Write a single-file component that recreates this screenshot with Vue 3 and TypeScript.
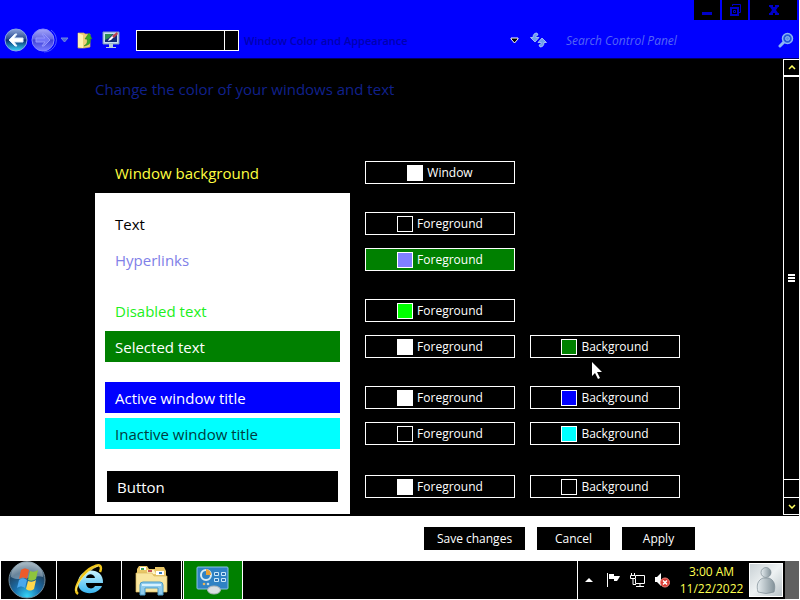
<script setup lang="ts">
import { ref } from 'vue'

interface Choice {
  label: string
  color: string
}

interface Item {
  name: string
  kind: string
  spaced: boolean
  choices: Choice[]
}

const fg = (color: string): Choice => ({ label: 'Foreground', color })
const bg = (color: string): Choice => ({ label: 'Background', color })

const items: Item[] = [
  { name: 'Text', kind: 'text', spaced: true, choices: [fg('#000000')] },
  { name: 'Hyperlinks', kind: 'link', spaced: false, choices: [fg('#8080ff')] },
  { name: 'Disabled text', kind: 'disabled', spaced: true, choices: [fg('#00ff00')] },
  { name: 'Selected text', kind: 'selected', spaced: false, choices: [fg('#ffffff'), bg('#008000')] },
  { name: 'Active window title', kind: 'active', spaced: true, choices: [fg('#ffffff'), bg('#0000ff')] },
  { name: 'Inactive window title', kind: 'inactive', spaced: false, choices: [fg('#000000'), bg('#00ffff')] },
  { name: 'Button', kind: 'button', spaced: true, choices: [fg('#ffffff'), bg('#000000')] },
]

const current = ref('Hyperlinks')
const query = ref('')
</script>

<template>
  <div class="screen">
    <header class="chrome">
      <div class="captions">
        <button class="caption" aria-label="Minimize">
          <svg width="14" height="14" viewBox="0 0 14 14"><path d="M2 9h10v3H2z" fill="#0000c8" /></svg>
        </button>
        <button class="caption" aria-label="Restore">
          <svg width="14" height="14" viewBox="0 0 14 14" fill="none" stroke="#0000c8">
            <path d="M4.500 3v-1.500h8v8H11" /><path d="M3 5h7v7H3z" stroke-width="2" /><path d="M5.500 7.500h2v2h-2z" />
          </svg>
        </button>
        <button class="caption close" aria-label="Close">
          <svg width="14" height="14" viewBox="0 0 14 14">
            <path d="M2 2h4v2h2V2h4v2h-1L9 7l2 3h1v2H8v-2H6v2H2v-2h1l2-3-2-3H2z" fill="#0000c8" />
          </svg>
        </button>
      </div>
      <nav class="nav">
        <button class="plain" aria-label="Back">
          <svg width="24" height="26" viewBox="0 0 24 26">
            <defs>
              <linearGradient id="back" x1="0" y1="0" x2="0" y2="1">
                <stop offset="0" stop-color="#8ba4d8" /><stop offset=".45" stop-color="#2a4b94" />
                <stop offset=".5" stop-color="#082c70" /><stop offset="1" stop-color="#36d6f8" />
              </linearGradient>
            </defs>
            <circle cx="12" cy="13" r="11" fill="url(#back)" stroke="#86a4e8" />
            <path d="M5 13l6-6h2l-3 4h9v4h-9l3 4h-2z" fill="#fff" stroke="#d9ecff" stroke-linejoin="round" />
          </svg>
        </button>
        <button class="plain" aria-label="Forward">
          <svg width="26" height="26" viewBox="0 0 26 26">
            <defs>
              <linearGradient id="fwd" x1="0" y1="0" x2="0" y2="1">
                <stop offset="0" stop-color="#a4a6f8" /><stop offset=".45" stop-color="#6466e4" />
                <stop offset=".5" stop-color="#3c3ed8" /><stop offset="1" stop-color="#7c80ff" />
              </linearGradient>
            </defs>
            <path d="M20 3a12 12 0 0 1-7 22" fill="none" stroke="#4c5cff" />
            <circle cx="12" cy="13" r="11" fill="url(#fwd)" stroke="#8488ff" />
            <path d="M19 13l-6-6h-2l3 4H5v4h9l-3 4h2z" fill="#7476f6" stroke="#9496fc" stroke-linejoin="round" />
          </svg>
        </button>
        <button class="plain" aria-label="Recent pages">
          <svg width="9" height="6" viewBox="0 0 9 6"><path d="M1 1h7L4.500 5z" fill="#4a68d8" stroke="#7088e0" /></svg>
        </button>
        <button class="plain folder" aria-label="Up">
          <svg width="16" height="18" viewBox="0 0 16 18">
            <path d="M1 2h6l1 1h5v13l-6 1H1z" fill="#ecd078" stroke="#d0b058" stroke-width=".7" />
            <path d="M1 2l5 2v13l-5-1z" fill="#fff0b0" />
            <path d="M7 15c3-2 4-4 3-7H8l4-6 3 6h-2c1 4-1 6-6 7z" fill="#3cab28" stroke="#1f7f18" stroke-width=".5" />
          </svg>
        </button>
        <svg class="place" width="18" height="18" viewBox="0 0 18 18">
          <path d="M1 1h16v12H1z" fill="#c6dcf0" stroke="#7796b8" />
          <path d="M3 3h12v8H3z" fill="#102878" />
          <path d="M3 3h8L7 7 3 9z" fill="#2c8c58" />
          <path d="M6 10l1-2 5-5 2 1-5 5z" fill="#fff" /><path d="M10 5l5-4 1 2-4 4z" fill="#ba4050" />
          <path d="M7 13h4v3h3v1H4v-1h3z" fill="#b8ccda" />
        </svg>
        <div class="combo"><span class="combo-field"></span><span class="combo-drop"></span></div>
        <span class="crumb">Window Color and Appearance</span>
        <button class="plain" aria-label="Previous locations">
          <svg width="9" height="7" viewBox="0 0 9 7"><path d="M1 1h7v1L4.500 6 1 2z" fill="#000" stroke="#fff" /></svg>
        </button>
        <button class="plain refresh" aria-label="Refresh">
          <svg width="17" height="16" viewBox="0 0 17 16" fill="#6f9fec" stroke="#b4d0fa" stroke-width=".8" stroke-linejoin="round">
            <path d="M7 1C4 1 3 3 3 5.500H.500L5 10l4-4.500H6C6 4 6 3.500 8 3z" />
            <path d="M10 15c3 0 4-2 4-4.500h2.500L12 6l-4 4.500h3c0 1.500 0 2-2 2.500z" />
          </svg>
        </button>
        <label class="search">
          <input v-model="query" type="search" placeholder="Search Control Panel" aria-label="Search Control Panel" />
          <svg width="16" height="16" viewBox="0 0 16 16" fill="none">
            <path d="M6 10l-4 4" stroke="#8ab4f4" stroke-width="3" stroke-linecap="round" />
            <circle cx="9.500" cy="6.500" r="5" fill="#2458d8" stroke="#8ab4f4" stroke-width="1.500" />
            <circle cx="9.500" cy="6.500" r="2" fill="#5c90e8" stroke="#8ab4f4" />
          </svg>
        </label>
      </nav>
    </header>

    <div class="body">
      <main class="content">
        <h1>Change the color of your windows and text</h1>
        <div class="columns">
          <div class="labels">
            <div class="label window">Window background</div>
            <div class="preview">
              <div v-for="item in items" :key="item.name" class="label" :class="[item.kind, { spaced: item.spaced }]">
                {{ item.name }}
              </div>
            </div>
          </div>
          <div class="pickers">
            <div class="picker-row">
              <button class="picker">
                <span class="swatch" :style="{ background: '#ffffff' }"></span>Window
              </button>
            </div>
            <div v-for="item in items" :key="item.name" class="picker-row" :class="[item.kind, { spaced: item.spaced }]">
              <button
                v-for="choice in item.choices"
                :key="choice.label"
                class="picker"
                :class="{ current: current === item.name }"
                @click="current = item.name"
              >
                <span class="swatch" :style="{ background: choice.color }"></span>{{ choice.label }}
              </button>
            </div>
          </div>
        </div>
      </main>
      <div class="scroll">
        <button class="scroll-end" aria-label="Scroll up">
          <svg width="8" height="5" viewBox="0 0 8 5"><path d="M1 4l3-3 3 3" fill="none" stroke="#ffff60" stroke-width="1.500" /></svg>
        </button>
        <div class="thumb"><i></i><i></i><i></i></div>
        <div class="track"></div>
        <button class="scroll-end down" aria-label="Scroll down">
          <svg width="8" height="5" viewBox="0 0 8 5"><path d="M1 1l3 3 3-3" fill="none" stroke="#ffff60" stroke-width="1.500" /></svg>
        </button>
      </div>
    </div>

    <footer class="actions">
      <button class="action wide">Save changes</button>
      <button class="action">Cancel</button>
      <button class="action">Apply</button>
    </footer>

    <div class="taskbar">
      <button class="task start" aria-label="Start">
        <svg width="38" height="38" viewBox="0 0 38 38">
          <defs>
            <radialGradient id="orb" cx=".5" cy=".95" r=".9">
              <stop offset="0" stop-color="#35d6f8" /><stop offset=".4" stop-color="#1a70ad" />
              <stop offset=".75" stop-color="#204666" /><stop offset="1" stop-color="#8196a4" />
            </radialGradient>
          </defs>
          <circle cx="19" cy="19" r="18" fill="url(#orb)" stroke="#718b9c" />
          <path d="M3 16A16 16 0 0 1 35 16C26 13 13 22 3 16z" fill="#d7e4ea" opacity=".4" />
          <path d="M13 9c3-2 5-2 8 0l-2 9c-3-2-5-2-8 0z" fill="#ed5b2b" />
          <path d="M22 10c3 1 5 1 8-1l-2 9c-3 2-5 2-8 1z" fill="#8ec53d" />
          <path d="M11 19c3-2 5-2 8 0l-2 8c-3-2-5-2-8 0z" fill="#4aa8ed" />
          <path d="M20 20c3 1 5 1 8-1l-2 9c-3 2-5 2-8 0z" fill="#ffd84c" />
        </svg>
      </button>
      <button class="task ie" aria-label="Internet Explorer">
        <svg width="32" height="34" viewBox="0 0 32 34">
          <defs>
            <linearGradient id="ie" x1="0" y1="0" x2="0" y2="1">
              <stop offset="0" stop-color="#c7f3ff" /><stop offset="1" stop-color="#38b4ef" />
            </linearGradient>
          </defs>
          <path d="M30 20H13c0 6 7 7 9 3h7c-4 10-24 10-24-3 0-16 26-17 25 0zm-8-5c-1-5-8-5-9 0z" fill="url(#ie)" />
          <path d="M5 31C-1 27 9 9 20 4c8-4 9 0 7 5" fill="none" stroke="#efc51b" stroke-width="2.500" />
          <path d="M3 28C3 21 13 8 25 3" fill="none" stroke="#fff08a" stroke-width=".8" />
        </svg>
      </button>
      <button class="task explorer" aria-label="Windows Explorer">
        <svg width="34" height="32" viewBox="0 0 34 32">
          <path d="M2 5l2-3h8l2 3h6V3h9l2 4v19H2z" fill="#e9c767" />
          <path d="M5 3h6v3H5z" fill="#fff" /><path d="M6 4h3v2H6z" fill="#37a157" />
          <path d="M12 6h7l2 4H12z" fill="#fff4c5" /><path d="M13 6h4v2h-4z" fill="#c85555" />
          <path d="M21 7h8v4h-8z" fill="#fff" /><path d="M24 8h3v2h-3z" fill="#377bbb" />
          <path d="M1 9h16l2 3h13v16H1z" fill="#f9e6a0" stroke="#d9b85c" stroke-width=".7" />
          <path d="M5 31V21q0-3 3-3h17q3 0 3 3v10h-5v-7H10v7z" fill="#8ecbed" stroke="#4b9bc7" />
          <path d="M7 20h19v2H7z" fill="#d6f1ff" />
        </svg>
      </button>
      <button class="task panel" aria-label="Control Panel">
        <svg width="34" height="30" viewBox="0 0 34 30">
          <rect x="1" y="2" width="31" height="22" rx="1" fill="#2f82c4" stroke="#8bc1e8" />
          <circle cx="10" cy="10" r="5" fill="#2f82c4" stroke="#d9ecf5" stroke-width="2" />
          <path d="M10 10V4a6 6 0 0 1 5 6z" fill="#e8a136" />
          <path d="M18.500 7.500h4v3h-4zm7 0h4v3h-4zm-7 6h4v3h-4zm7 0h4v3h-4z" fill="#2c70b3" stroke="#c9e8fa" />
          <circle cx="8" cy="19" r="1.300" fill="#e9b45a" /><circle cx="12" cy="19" r="1.300" fill="#bdd9e9" />
          <ellipse cx="18" cy="25" rx="6.500" ry="4" fill="#d9dfe2" stroke="#aab3b9" />
        </svg>
      </button>
      <div class="tray">
        <svg width="8" height="4" viewBox="0 0 8 4"><path d="M0 4l4-4 4 4z" fill="#fff" /></svg>
        <svg class="flag" width="16" height="16" viewBox="0 0 16 16"><path d="M1 1h1v14H1zM3 2h5v2h6l-1 2-2 3H8V7H3z" fill="#fff" /></svg>
        <svg width="16" height="16" viewBox="0 0 16 16" fill="none" stroke="#fff">
          <path d="M1.500 1v3M4.500 1v3M.5 3.500h5v3h-5zM3 6v6.500h3M6 3.500h8.500v8H5.500V7M10 12v2M6 14.500h8" />
        </svg>
        <svg width="16" height="16" viewBox="0 0 16 16">
          <path d="M1 5h2l4-4v13l-4-4H1z" fill="#fff" />
          <circle cx="11" cy="10.500" r="4.500" fill="#d93830" stroke="#ef8b82" />
          <path d="M9 8.500l4 4m0-4l-4 4" stroke="#fff" stroke-width="1.500" />
        </svg>
      </div>
      <div class="clock"><time>3:00 AM</time><time>11/22/2022</time></div>
      <svg class="avatar" width="34" height="34" viewBox="0 0 34 34">
        <defs>
          <linearGradient id="tile" x1="0" y1="0" x2="1" y2="1">
            <stop offset="0" stop-color="#c8d0d4" /><stop offset=".5" stop-color="#eef2f3" />
            <stop offset="1" stop-color="#b8c2c7" />
          </linearGradient>
          <linearGradient id="person" x1="0" y1="0" x2="1" y2="0">
            <stop offset="0" stop-color="#e6edf0" /><stop offset="1" stop-color="#829199" />
          </linearGradient>
        </defs>
        <rect x=".5" y=".5" width="33" height="33" fill="url(#tile)" stroke="#fff" />
        <path d="M9 29c-2-7 0-12 5-14h6c5 2 7 7 5 14q-8 3-16 0z" fill="url(#person)" stroke="#7d8b93" stroke-width=".7" />
        <circle cx="17" cy="9.500" r="5" fill="url(#person)" stroke="#7d8b93" stroke-width=".7" />
      </svg>
      <button class="peek" aria-label="Show desktop"></button>
    </div>

    <svg class="pointer" width="12" height="19" viewBox="0 0 12 19">
      <path d="M1 1v14l3-3 3 6 2-1-3-6h5z" fill="#fff" />
    </svg>
  </div>
</template>

<style>
body {
  background: #fff;
}
</style>

<style scoped>
.screen {
  position: relative;
  box-sizing: border-box;
  display: flex;
  flex-direction: column;
  min-height: 100vh;
  border-right: 1px solid #fff;
  border-bottom: 1px solid #fff;
  background: #000;
  color: #fff;
  font-family: "Open Sans", "Noto Sans", sans-serif;
  font-size: 12px;
}
button {
  margin: 0;
  padding: 0;
  border: 0;
  background: none;
  color: inherit;
  font: inherit;
}
svg {
  display: block;
  flex: none;
}
.chrome {
  background: #00f;
  border-bottom: 1px solid #000060;
}
.captions {
  display: flex;
  justify-content: flex-end;
  gap: 2px;
  height: 20px;
  padding-right: 2px;
}
.caption {
  display: flex;
  align-items: center;
  justify-content: center;
  width: 26px;
  background: #000;
}
.caption.close {
  width: 47px;
}
.nav {
  display: flex;
  align-items: center;
  box-sizing: border-box;
  height: 38px;
  padding: 2px 5px 0 4px;
  gap: 3px;
}
.plain {
  display: flex;
}
.folder {
  margin-left: 5px;
}
.place {
  margin-left: 6px;
}
.combo {
  display: flex;
  box-sizing: border-box;
  width: 103px;
  height: 21px;
  margin-left: 13px;
  border: 1px solid #fff;
  background: #000;
}
.combo-field {
  flex: 1;
  border-right: 1px solid #fff;
}
.combo-drop {
  width: 13px;
}
.crumb {
  flex: 1;
  padding-left: 2px;
  color: #0000b0;
  font-size: 11px;
  font-weight: 600;
}
.refresh {
  margin-left: 8px;
}
.search {
  display: flex;
  align-items: center;
  width: 228px;
  margin-left: 16px;
}
.search input {
  flex: 1;
  min-width: 0;
  padding: 0;
  border: 0;
  outline: 0;
  background: none;
  color: #fff;
  font: italic 12px "Open Sans", "Noto Sans", sans-serif;
}
.search input::placeholder {
  color: #5566f4;
  opacity: 1;
}
.body {
  display: flex;
  flex: 1;
}
.content {
  flex: 1;
  padding: 19px 20px 2px 95px;
}
h1 {
  margin: 0;
  color: #10208c;
  font-size: 15px;
  font-weight: 400;
  line-height: 22px;
}
.columns {
  display: flex;
  gap: 15px;
  margin-top: 57px;
}
.labels {
  width: 255px;
}
.preview {
  display: flow-root;
  padding: 0 10px 12px;
  background: #fff;
}
.label {
  height: 31px;
  margin-bottom: 5px;
  padding-left: 10px;
  font-size: 15px;
  line-height: 33px;
}
.preview .label:last-child {
  margin-bottom: 0;
}
.label.spaced {
  margin-top: 20px;
}
.label.window {
  padding-left: 20px;
  color: #ffff40;
}
.label.text {
  margin-top: 15px;
  color: #000;
}
.label.link {
  color: #8080e8;
}
.label.disabled {
  color: #20f020;
}
.label.selected {
  background: #008000;
}
.label.active {
  background: #00f;
}
.label.inactive {
  background: #0ff;
  color: #003c40;
}
.label.button {
  margin: 22px 2px 0;
  background: #000;
}
.pickers {
  flex: 1;
}
.picker-row {
  display: flex;
  align-items: center;
  gap: 15px;
  height: 31px;
  margin-bottom: 5px;
}
.picker-row.spaced {
  margin-top: 20px;
}
.picker-row.button {
  margin-top: 22px;
}
.picker {
  display: flex;
  align-items: center;
  justify-content: center;
  gap: 4px;
  box-sizing: border-box;
  width: 150px;
  height: 23px;
  border: 1px solid #fff;
}
.picker.current {
  background: #008000;
}
.swatch {
  box-sizing: border-box;
  width: 16px;
  height: 16px;
  border: 1px solid #fff;
}
.scroll {
  display: flex;
  flex-direction: column;
  box-sizing: border-box;
  width: 16px;
  margin-bottom: 1px;
  border: 1px solid #fff;
  border-right: 0;
}
.scroll-end {
  display: flex;
  align-items: center;
  justify-content: center;
  height: 16px;
  border-bottom: 1px solid #fff;
}
.scroll-end.down {
  border-bottom: 0;
}
.thumb {
  display: flex;
  flex: 1;
  flex-direction: column;
  align-items: center;
  justify-content: center;
  gap: 1px;
  border-top: 1px solid #fff;
  border-bottom: 1px solid #fff;
}
.thumb i {
  width: 7px;
  height: 2px;
  background: #fff;
}
.track {
  height: 17px;
  border-bottom: 1px solid #fff;
}
.actions {
  display: flex;
  align-items: center;
  justify-content: flex-end;
  gap: 12px;
  height: 45px;
  padding-right: 104px;
  background: #fff;
}
.action {
  width: 73px;
  height: 23px;
  background: #000;
}
.action.wide {
  width: 101px;
}
.taskbar {
  display: flex;
  align-items: center;
  height: 38px;
}
.task {
  display: flex;
  align-items: center;
  justify-content: center;
  box-sizing: border-box;
  height: 38px;
  border-right: 1px solid #fff;
}
.start {
  width: 57px;
  padding-right: 4px;
  border-left: 1px solid #fff;
}
.ie {
  width: 65px;
}
.explorer {
  width: 60px;
}
.panel {
  width: 60px;
  margin-left: 1px;
  border-left: 1px solid #fff;
  background: #008000;
}
.tray {
  display: flex;
  align-items: center;
  gap: 8px;
  height: 38px;
  margin-left: auto;
  padding: 0 12px 0 7px;
  border-left: 1px solid #fff;
}
.flag {
  margin-left: 5px;
}
.clock {
  display: flex;
  flex-direction: column;
  align-items: center;
  width: 59px;
  color: #ffff50;
  line-height: 17px;
}
.avatar {
  margin-left: 8px;
}
.peek {
  width: 14px;
  height: 38px;
  margin-left: 2px;
  background: #606060;
}
.pointer {
  position: absolute;
  top: 361px;
  left: 591px;
}
</style>
